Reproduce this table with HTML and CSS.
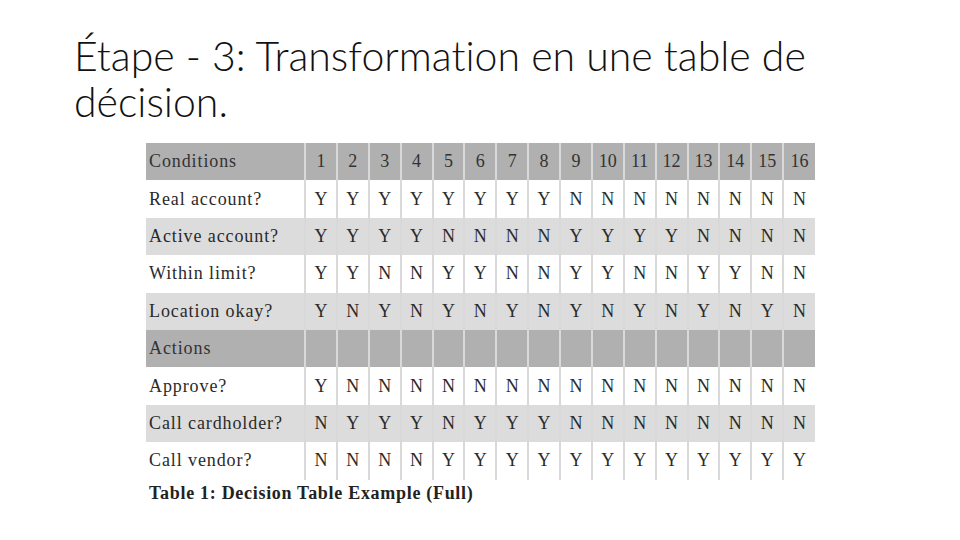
FILE: index.html
```html
<!DOCTYPE html>
<html lang="fr">
<head>
<meta charset="utf-8">
<link rel="stylesheet" href="styles.css">
</head>
<body>
<div class="slide">
  <h1 class="title">Étape - 3: Transformation en une table de décision.</h1>
  <div class="figure">
    <table class="dt">
      <colgroup><col class="c-label"><col span="16"></colgroup>
      <tr class="hdr"><td class="lbl">Conditions</td><td>1</td><td>2</td><td>3</td><td>4</td><td>5</td><td>6</td><td>7</td><td>8</td><td>9</td><td>10</td><td>11</td><td>12</td><td>13</td><td>14</td><td>15</td><td>16</td></tr>
      <tr class="w"><td class="lbl">Real account?</td><td>Y</td><td>Y</td><td>Y</td><td>Y</td><td>Y</td><td>Y</td><td>Y</td><td>Y</td><td>N</td><td>N</td><td>N</td><td>N</td><td>N</td><td>N</td><td>N</td><td>N</td></tr>
      <tr class="g"><td class="lbl">Active account?</td><td>Y</td><td>Y</td><td>Y</td><td>Y</td><td>N</td><td>N</td><td>N</td><td>N</td><td>Y</td><td>Y</td><td>Y</td><td>Y</td><td>N</td><td>N</td><td>N</td><td>N</td></tr>
      <tr class="w"><td class="lbl">Within limit?</td><td>Y</td><td>Y</td><td>N</td><td>N</td><td>Y</td><td>Y</td><td>N</td><td>N</td><td>Y</td><td>Y</td><td>N</td><td>N</td><td>Y</td><td>Y</td><td>N</td><td>N</td></tr>
      <tr class="g"><td class="lbl">Location okay?</td><td>Y</td><td>N</td><td>Y</td><td>N</td><td>Y</td><td>N</td><td>Y</td><td>N</td><td>Y</td><td>N</td><td>Y</td><td>N</td><td>Y</td><td>N</td><td>Y</td><td>N</td></tr>
      <tr class="hdr"><td class="lbl">Actions</td><td></td><td></td><td></td><td></td><td></td><td></td><td></td><td></td><td></td><td></td><td></td><td></td><td></td><td></td><td></td><td></td></tr>
      <tr class="w"><td class="lbl">Approve?</td><td>Y</td><td>N</td><td>N</td><td>N</td><td>N</td><td>N</td><td>N</td><td>N</td><td>N</td><td>N</td><td>N</td><td>N</td><td>N</td><td>N</td><td>N</td><td>N</td></tr>
      <tr class="g"><td class="lbl">Call cardholder?</td><td>N</td><td>Y</td><td>Y</td><td>Y</td><td>N</td><td>Y</td><td>Y</td><td>Y</td><td>N</td><td>N</td><td>N</td><td>N</td><td>N</td><td>N</td><td>N</td><td>N</td></tr>
      <tr class="w"><td class="lbl">Call vendor?</td><td>N</td><td>N</td><td>N</td><td>N</td><td>Y</td><td>Y</td><td>Y</td><td>Y</td><td>Y</td><td>Y</td><td>Y</td><td>Y</td><td>Y</td><td>Y</td><td>Y</td><td>Y</td></tr>
    </table>
    <p class="caption">Table 1: Decision Table Example (Full)</p>
  </div>
</div>
</body>
</html>
```
FILE: styles.css
```css
html, body {
  margin: 0;
  padding: 0;
  background: #ffffff;
}
.slide {
  width: 960px;
  height: 540px;
  overflow: hidden;
  padding: 33px 0 0 0;
  box-sizing: border-box;
}
.title {
  margin: 0 0 0 74px;
  width: 800px;
  font-family: Lato, "Open Sans", sans-serif;
  font-weight: 300;
  font-size: 41px;
  line-height: 46px;
  color: #111111;
  font-variant-ligatures: none;
  font-feature-settings: "liga" 0, "clig" 0;
}
.figure {
  margin: 18px 0 0 146px;
}
.dt {
  table-layout: fixed;
  border-collapse: collapse;
  width: 669px;
  font-family: "Liberation Serif", "DejaVu Serif", serif;
  font-size: 18px;
  color: #2a2a2a;
}
.c-label {
  width: 159px;
}
.dt td {
  height: 37.4px;
  padding: 0;
  text-align: center;
  vertical-align: middle;
  border-left: 2px solid #d9d9d9;
  box-sizing: border-box;
}
.dt td.lbl {
  text-align: left;
  padding-left: 3px;
  border-left: none;
  letter-spacing: 0.9px;
}
.hdr td { background: #b0b0b0; color: #333333; }
.w td { background: #ffffff; }
.g td { background: #dcdcdc; }
.caption {
  margin: 3px 0 0 3px;
  font-family: "Liberation Serif", "DejaVu Serif", serif;
  font-weight: bold;
  font-size: 18px;
  letter-spacing: 0.7px;
  color: #222222;
}
```
